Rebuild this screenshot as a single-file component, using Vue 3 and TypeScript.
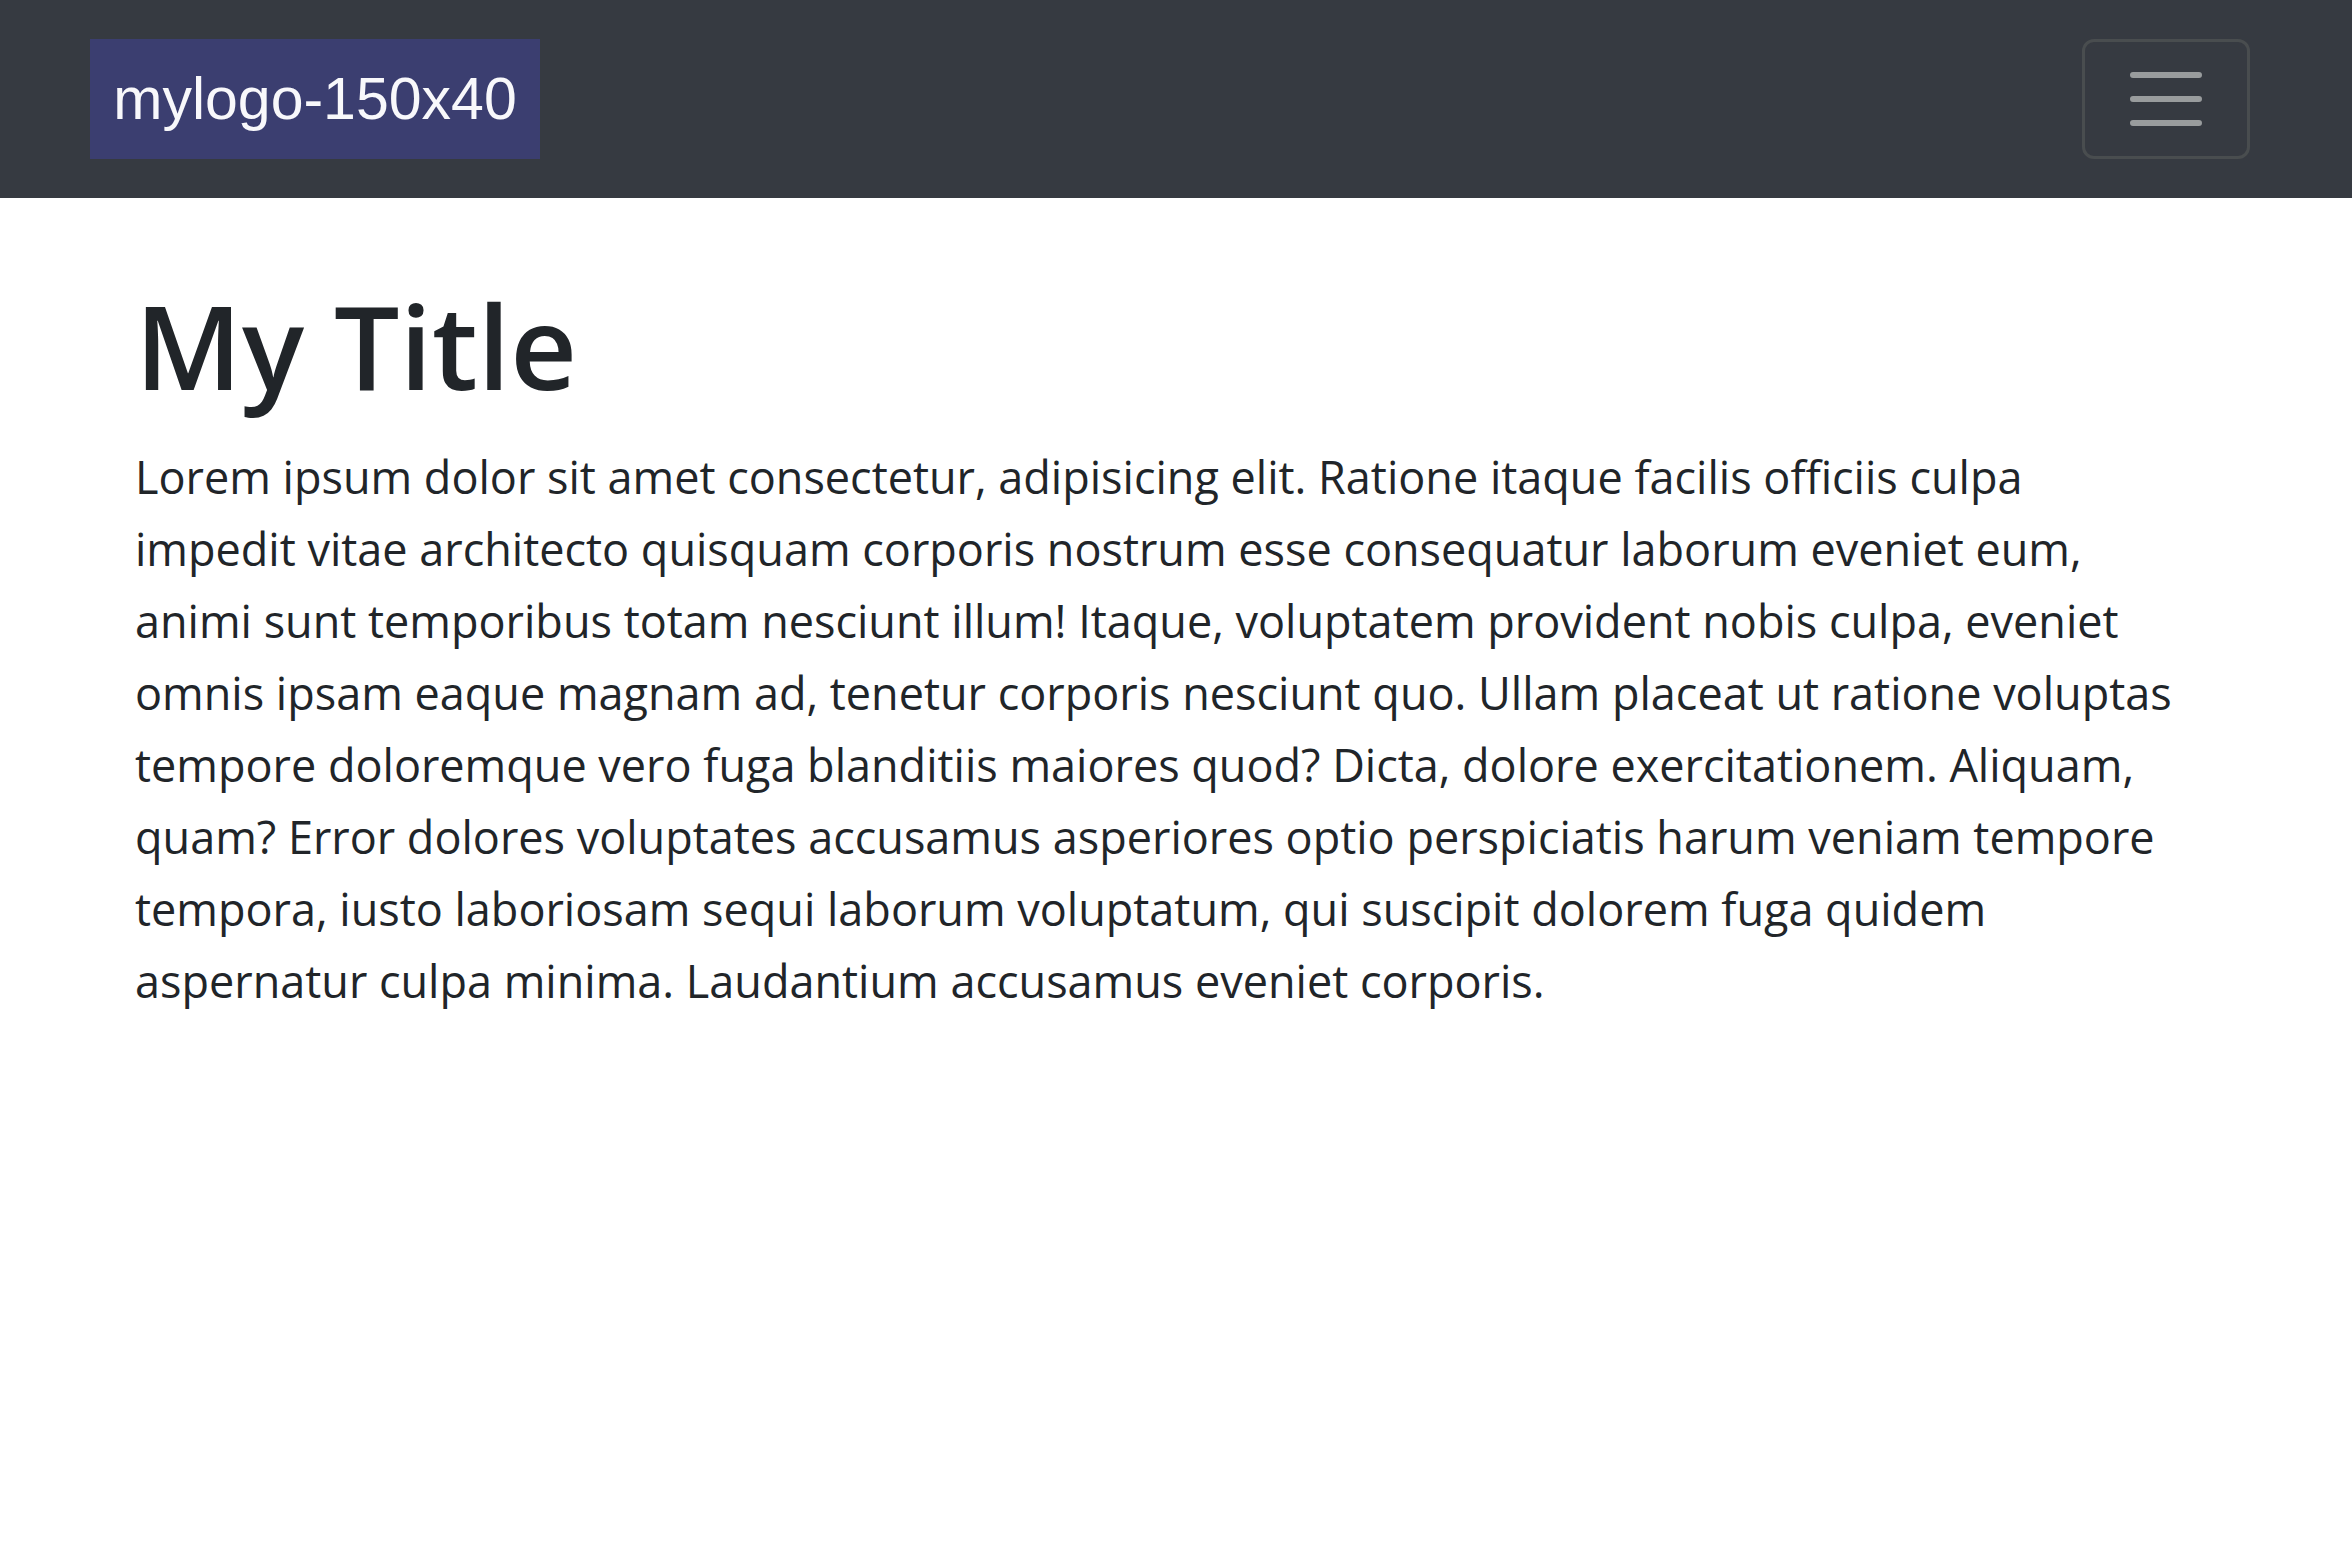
<script setup lang="ts">
import { ref } from 'vue'

const expanded = ref<boolean>(false)
const title = 'My Title'
const lines: string[] = [
  'Lorem ipsum dolor sit amet consectetur, adipisicing elit. Ratione itaque facilis officiis culpa',
  'impedit vitae architecto quisquam corporis nostrum esse consequatur laborum eveniet eum,',
  'animi sunt temporibus totam nesciunt illum! Itaque, voluptatem provident nobis culpa, eveniet',
  'omnis ipsam eaque magnam ad, tenetur corporis nesciunt quo. Ullam placeat ut ratione voluptas',
  'tempore doloremque vero fuga blanditiis maiores quod? Dicta, dolore exercitationem. Aliquam,',
  'quam? Error dolores voluptates accusamus asperiores optio perspiciatis harum veniam tempore',
  'tempora, iusto laboriosam sequi laborum voluptatum, qui suscipit dolorem fuga quidem',
  'aspernatur culpa minima. Laudantium accusamus eveniet corporis.',
]
</script>

<template>
  <header class="navbar">
    <a class="brand" href="#">mylogo-150x40</a>
    <button
      class="toggler"
      type="button"
      aria-label="Toggle navigation"
      :aria-expanded="expanded"
      @click="expanded = !expanded"
    >
      <svg class="toggler-icon" viewBox="0 0 30 30" aria-hidden="true">
        <path
          d="M4 7h22M4 15h22M4 23h22"
          fill="none"
          stroke="#999c9d"
          stroke-linecap="round"
          stroke-miterlimit="10"
          stroke-width="2"
        />
      </svg>
    </button>
  </header>
  <main class="content">
    <h1 class="title">{{ title }}</h1>
    <p class="copy">
      <template v-for="line in lines" :key="line">{{ line }}<br /></template>
    </p>
  </main>
</template>

<style>
body {
  background: #fff;
}
</style>

<style scoped>
.navbar {
  display: flex;
  align-items: center;
  justify-content: space-between;
  box-sizing: border-box;
  padding: 39px 102px 39px 90px;
  background: #363a41;
}
.brand {
  box-sizing: border-box;
  width: 450px;
  height: 120px;
  background: #3b3e70;
  color: #f8f8fb;
  font: 59px/120px "Liberation Sans", Arial, sans-serif;
  text-align: center;
  text-decoration: none;
  white-space: nowrap;
}
.toggler {
  display: flex;
  align-items: center;
  justify-content: center;
  box-sizing: border-box;
  width: 168px;
  height: 120px;
  padding: 0;
  border: 3px solid #494d4f;
  border-radius: 12px;
  background: transparent;
  cursor: pointer;
}
.toggler-icon {
  width: 90px;
  height: 90px;
}
.content {
  padding: 75px 135px;
  color: #212529;
  font-family: "Open Sans", "Noto Sans", sans-serif;
}
.title {
  margin: 0 0 24px;
  font-size: 116px;
  font-weight: 600;
  line-height: 144px;
}
.copy {
  margin: 0;
  font-size: 45px;
  line-height: 72px;
}
</style>
